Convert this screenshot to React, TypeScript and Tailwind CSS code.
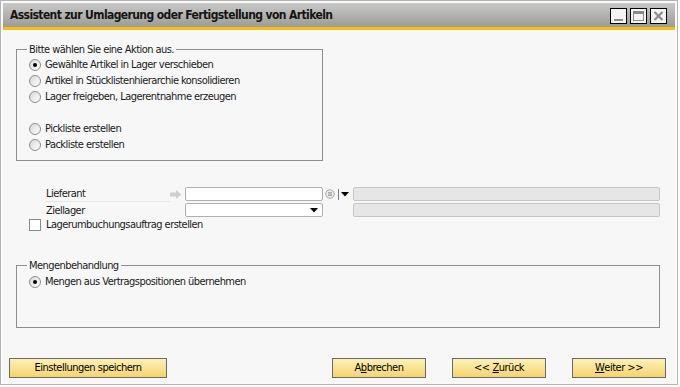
import React from 'react';

const font = { fontFamily: "Tahoma, 'DejaVu Sans Condensed', 'Liberation Sans', sans-serif" };

const Radio: React.FC<{ checked?: boolean }> = ({ checked }) => (
  <div className="w-[12px] h-[12px] rounded-full border border-[#8d8d8d] bg-gradient-to-br from-[#d8d8d8] to-white flex items-center justify-center shrink-0">
    {checked && <div className="w-[4px] h-[4px] rounded-full bg-black" />}
  </div>
);

const RadioRow: React.FC<{ label: string; checked?: boolean }> = ({ label, checked }) => (
  <div className="h-[16px] flex items-center gap-[4px]">
    <Radio checked={checked} />
    <span className="pt-[1px]">{label}</span>
  </div>
);

const Triangle = () => (
  <svg width="8" height="5" viewBox="0 0 8 5">
    <path d="M0 0 H8 L4 4.5 Z" fill="#000" />
  </svg>
);

const Button: React.FC<{ children: React.ReactNode; className?: string }> = ({ children, className }) => (
  <button className={`h-[20px] border border-[#6a6a6a] bg-gradient-to-b from-[#fdf1b8] to-[#f4d46c] text-[11px] tracking-[-0.5px] text-black flex items-center justify-center ${className ?? ''}`}>
    {children}
  </button>
);

const WinButton: React.FC<{ children: React.ReactNode }> = ({ children }) => (
  <div className="w-[17px] h-[16px] border border-black bg-[#f4f4f4] flex items-center justify-center">
    {children}
  </div>
);

export default function App() {
  return (
    <div className="w-[680px] h-[387px] bg-white" style={font}>
      <div className="w-[678px] h-[385px] border border-[#b4b4b4] p-[2px] flex flex-col bg-[#fafafa]">
        {/* title bar */}
        <div className="h-[24px] bg-gradient-to-b from-[#c9c9c9] to-[#9b9c98] flex items-center pl-[7px] pr-[8px]">
          <span className="text-[12px] font-bold text-[#141414] tracking-[-0.6px]">
            Assistent zur Umlagerung oder Fertigstellung von Artikeln
          </span>
          <div className="ml-auto flex gap-[3px] mt-[2px]">
            <WinButton>
              <div className="w-[9px] h-[2px] bg-[#8a8a8a] mt-[8px]" />
            </WinButton>
            <WinButton>
              <div className="w-[11px] h-[10px] border border-[#8a8a8a] border-t-[3px]" />
            </WinButton>
            <WinButton>
              <svg width="11" height="10" viewBox="0 0 11 10">
                <path d="M1.5 1 L9.5 9 M9.5 1 L1.5 9" stroke="#8a8a8a" strokeWidth="2.2" />
              </svg>
            </WinButton>
          </div>
        </div>
        <div className="h-[3px] bg-[#f6bf12]" />

        {/* content */}
        <div className="flex-1 bg-[#f7f7f7] text-[11px] tracking-[-0.55px] text-[#1a1a1a] flex flex-col">
          {/* action group */}
          <div className="ml-[13px] mt-[19px] w-[307px] h-[112px] border border-[#8e8e8e] pl-[12px]">
            <div className="-mt-[7px] -ml-[2px] px-[2px] bg-[#f7f7f7] w-fit leading-[13px]">Bitte wählen Sie eine Aktion aus.</div>
            <div className="mt-[1px]">
              <RadioRow label="Gewählte Artikel in Lager verschieben" checked />
              <RadioRow label="Artikel in Stücklistenhierarchie konsolidieren" />
              <RadioRow label="Lager freigeben, Lagerentnahme erzeugen" />
              <div className="h-[16px]" />
              <RadioRow label="Pickliste erstellen" />
              <RadioRow label="Packliste erstellen" />
            </div>
          </div>

          {/* fields */}
          <div className="mt-[25px] pl-[43px]">
            <div className="h-[16px] flex items-center">
              <div className="w-[124px] h-full flex items-end leading-[13px] pb-[1px] border-b border-[#e6e6e6]">Lieferant</div>
              <div className="w-[15px] flex items-center">
                <svg width="12" height="9" viewBox="0 0 12 9">
                  <path d="M0 2.5 H6 V0 L11.5 4.5 L6 9 V6.5 H0 Z" fill="#cfcfcf" />
                </svg>
              </div>
              <div className="w-[138px] h-[14px] bg-white border border-[#b0b0b0] rounded-[2px]" />
              <div className="w-[30px] flex items-center pl-[2px]">
                <svg width="10" height="10" viewBox="0 0 10 10">
                  <circle cx="5" cy="5" r="4.3" fill="#ececec" stroke="#a0a0a0" strokeWidth="0.9" />
                  <path d="M3 3.6 H7 M3 5 H7 M3 6.4 H7" stroke="#909090" strokeWidth="0.8" />
                </svg>
                <div className="w-[1px] h-[11px] bg-[#6a7a90] ml-[3px] mr-[2px]" />
                <Triangle />
              </div>
              <div className="w-[307px] h-[14px] bg-[#e6e6e6] border border-[#c6c6c6] rounded-[2px]" />
            </div>
            <div className="h-[16px] flex items-center">
              <div className="w-[139px] h-full flex items-end leading-[13px] pb-[1px]">Ziellager</div>
              <div className="w-[138px] h-[14px] bg-white border border-[#b0b0b0] rounded-[2px] flex items-center justify-end pr-[4px]">
                <Triangle />
              </div>
              <div className="w-[30px]" />
              <div className="w-[307px] h-[14px] bg-[#e6e6e6] border border-[#c6c6c6] rounded-[2px]" />
            </div>
          </div>
          <div className="h-[14px] flex items-center pl-[26px] gap-[5px]">
            <div className="w-[12px] h-[12px] border border-[#8a8a8a] bg-white" />
            <span className="pt-[1px]">Lagerumbuchungsauftrag erstellen</span>
          </div>

          {/* quantity group */}
          <div className="ml-[13px] mt-[33px] w-[644px] h-[63px] border border-[#8e8e8e] pl-[12px]">
            <div className="-mt-[7px] -ml-[2px] px-[2px] bg-[#f7f7f7] w-fit leading-[13px]">Mengenbehandlung</div>
            <div className="mt-[2px]">
              <RadioRow label="Mengen aus Vertragspositionen übernehmen" checked />
            </div>
          </div>

          {/* buttons */}
          <div className="mt-[30px] flex pl-[6px] pr-[9px]">
            <Button className="w-[158px]">Einstellungen speichern</Button>
            <div className="ml-auto flex gap-[26px]">
              <Button className="w-[94px]">A<span className="underline">b</span>brechen</Button>
              <Button className="w-[94px]">&lt;&lt; <span className="underline ml-[3px]">Z</span>urück</Button>
              <Button className="w-[94px]"><span className="underline">W</span>eiter &gt;&gt;</Button>
            </div>
          </div>
        </div>
      </div>
    </div>
  );
}
